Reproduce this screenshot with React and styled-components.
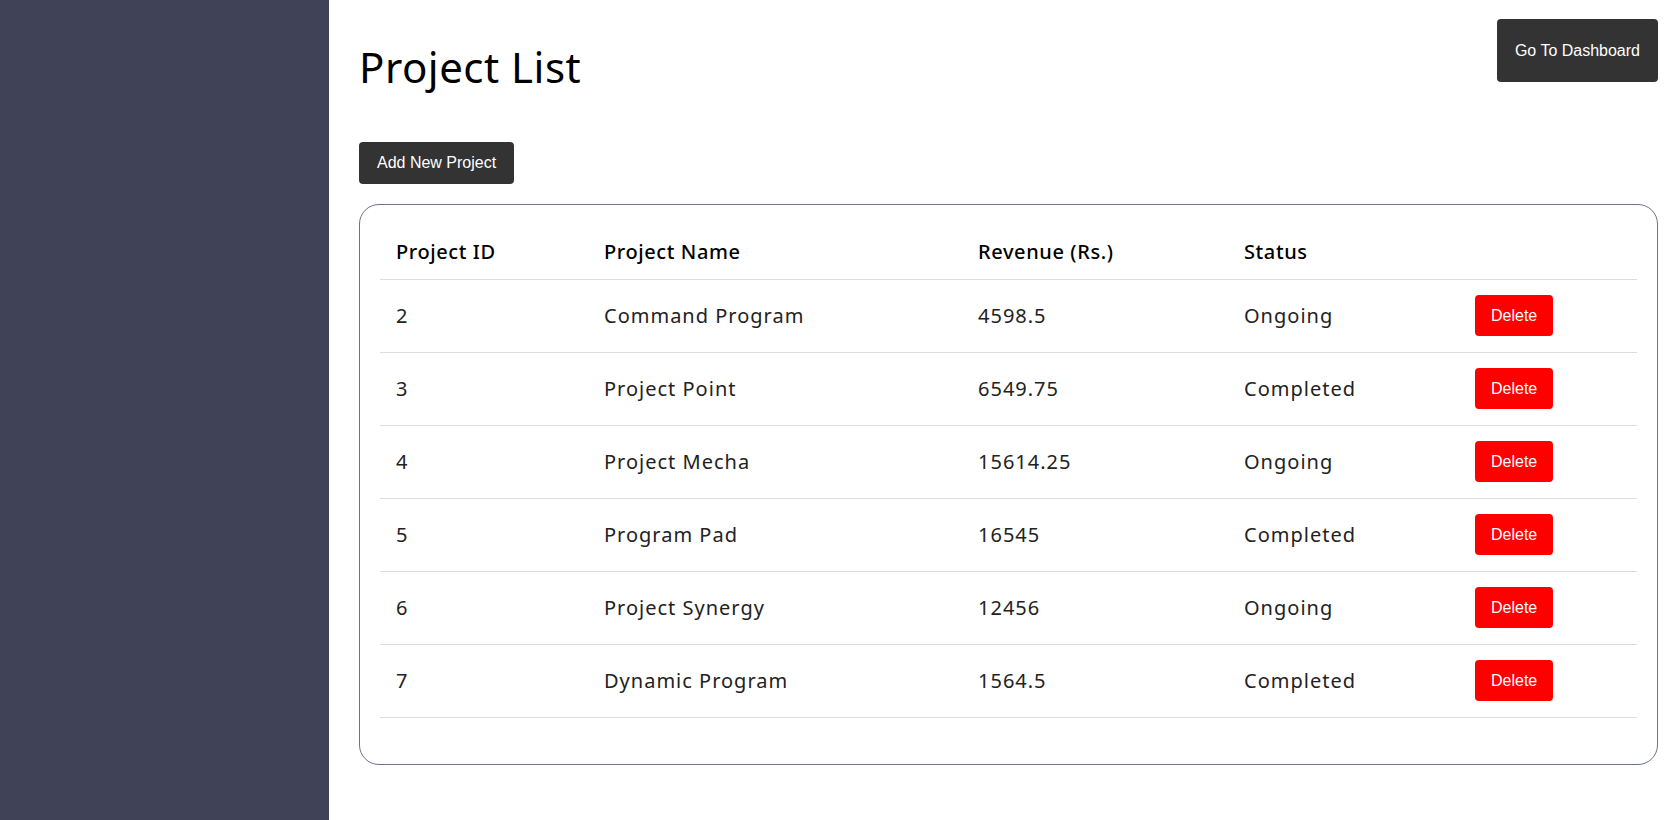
import React from 'react';
import styled, { createGlobalStyle } from 'styled-components';

const GlobalStyle = createGlobalStyle`
  body {
    margin: 0;
    font-family: "Noto Sans", sans-serif;
    background: #fff;
  }
`;

const Layout = styled.div`
  display: flex;
  min-height: 820px;
`;

const Sidebar = styled.aside`
  width: 329px;
  flex-shrink: 0;
  background: #404258;
`;

const Main = styled.main`
  flex: 1;
  padding: 19px 17px 0 30px;
`;

const TopBar = styled.div`
  display: flex;
  justify-content: space-between;
  align-items: flex-start;
`;

const Title = styled.h1`
  margin: 27px 0 0 0;
  font-size: 42px;
  line-height: 1;
  font-weight: 400;
  color: #000;
  letter-spacing: 0.5px;
`;

const DarkButton = styled.button`
  background: #333;
  color: #fff;
  border: none;
  border-radius: 4px;
  font-family: "Liberation Sans", Arial, sans-serif;
  font-size: 16px;
  padding: 0 18px;
  height: ${(p) => p.$height || 42}px;
  cursor: pointer;
`;

const Toolbar = styled.div`
  margin-top: 54px;
`;

const Card = styled.div`
  margin-top: 20px;
  border: 1px solid #6b728e;
  border-radius: 20px;
  padding: 20px 20px 46px 20px;
`;

const Table = styled.table`
  width: 100%;
  border-collapse: collapse;
  table-layout: fixed;
`;

const Th = styled.th`
  text-align: left;
  font-weight: 500;
  font-size: 20px;
  color: #000;
  padding: 12px 16px;
  height: 54px;
  box-sizing: border-box;
  border-bottom: 1px solid #ddd;
  letter-spacing: 0.6px;
`;

const Td = styled.td`
  font-size: 20px;
  color: #222;
  padding: 15px 16px;
  height: 73px;
  box-sizing: border-box;
  border-bottom: 1px solid #ddd;
  letter-spacing: 1px;
`;

const DeleteButton = styled.button`
  background: #ff0000;
  color: #fff;
  border: none;
  border-radius: 4px;
  font-family: "Liberation Sans", Arial, sans-serif;
  font-size: 16px;
  letter-spacing: 0;
  padding: 0 16px;
  height: 41px;
  cursor: pointer;
`;

const projects = [
  { id: 2, name: 'Command Program', revenue: '4598.5', status: 'Ongoing' },
  { id: 3, name: 'Project Point', revenue: '6549.75', status: 'Completed' },
  { id: 4, name: 'Project Mecha', revenue: '15614.25', status: 'Ongoing' },
  { id: 5, name: 'Program Pad', revenue: '16545', status: 'Completed' },
  { id: 6, name: 'Project Synergy', revenue: '12456', status: 'Ongoing' },
  { id: 7, name: 'Dynamic Program', revenue: '1564.5', status: 'Completed' },
];

const App = () => {
  return (
    <Layout>
      <GlobalStyle />
      <Sidebar />
      <Main>
        <TopBar>
          <Title>Project List</Title>
          <DarkButton $height={63}>Go To Dashboard</DarkButton>
        </TopBar>
        <Toolbar>
          <DarkButton>Add New Project</DarkButton>
        </Toolbar>
        <Card>
          <Table>
            <colgroup>
              <col style={{ width: 208 }} />
              <col style={{ width: 374 }} />
              <col style={{ width: 266 }} />
              <col style={{ width: 231 }} />
              <col />
            </colgroup>
            <thead>
              <tr>
                <Th>Project ID</Th>
                <Th>Project Name</Th>
                <Th>Revenue (Rs.)</Th>
                <Th>Status</Th>
                <Th />
              </tr>
            </thead>
            <tbody>
              {projects.map((p) => (
                <tr key={p.id}>
                  <Td>{p.id}</Td>
                  <Td>{p.name}</Td>
                  <Td>{p.revenue}</Td>
                  <Td>{p.status}</Td>
                  <Td>
                    <DeleteButton>Delete</DeleteButton>
                  </Td>
                </tr>
              ))}
            </tbody>
          </Table>
        </Card>
      </Main>
    </Layout>
  );
};

export default App;
